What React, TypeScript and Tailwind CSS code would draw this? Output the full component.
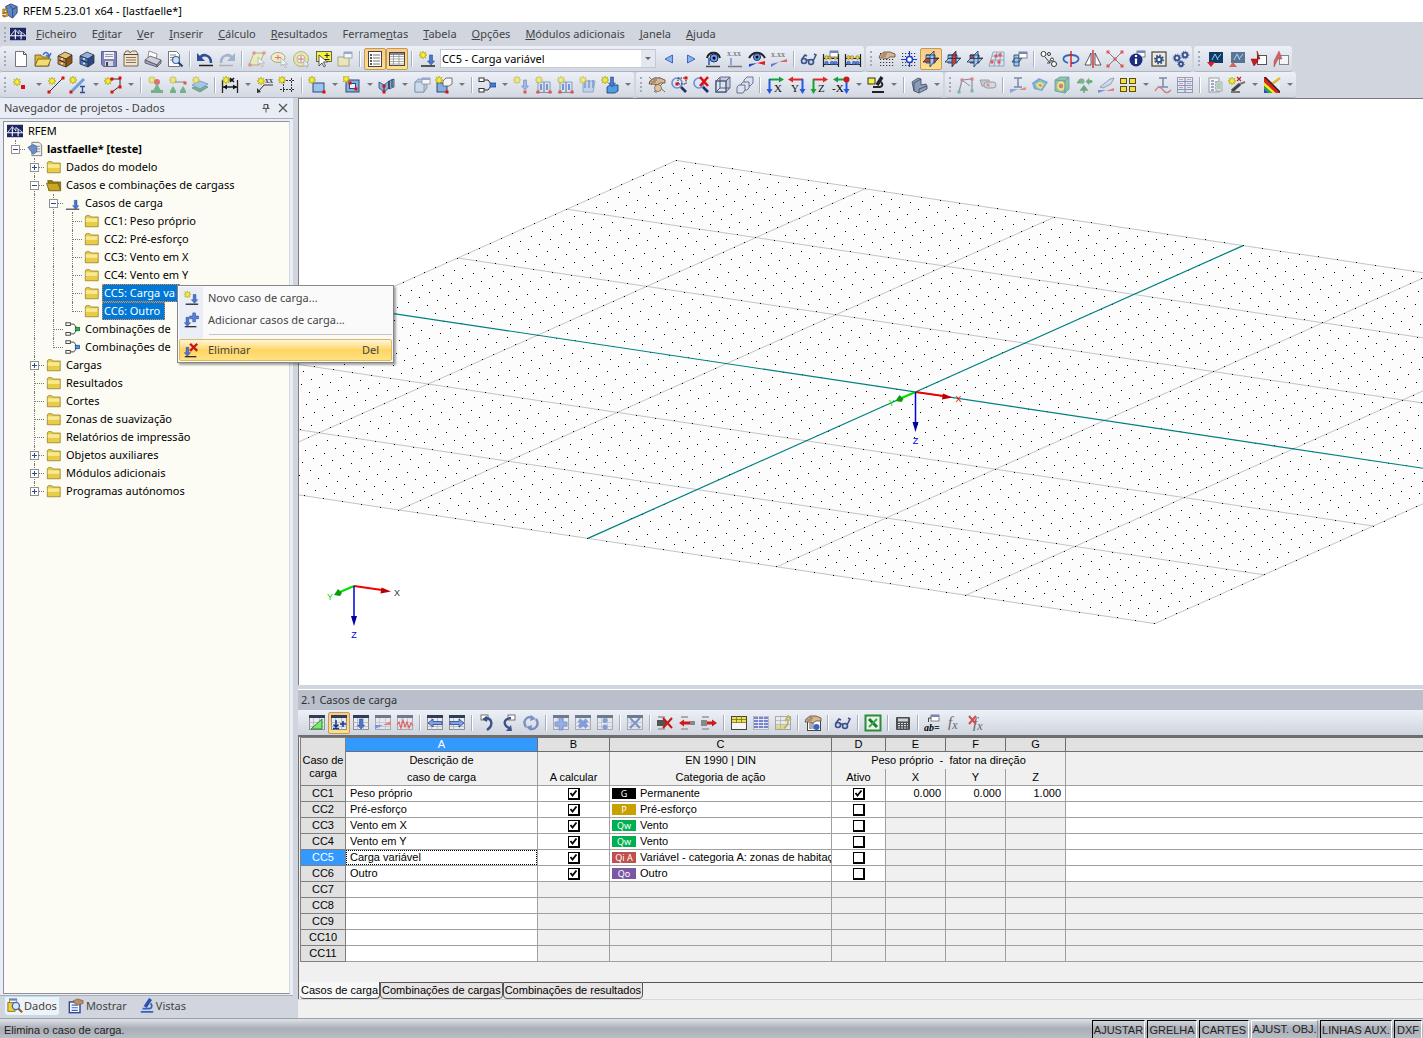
import React, { useState } from 'react'
import clsx from 'clsx'

const BURST = 'M0-4 1-1.7 3-3 1.8-.9 4 0 1.8.9 3 3 1 1.7 0 4-1 1.7-3 3-1.8.9-4 0-1.8-.9-3-3-1-1.7Z'

const star = (x: number, y: number) => (
  <path transform={`translate(${x} ${y})`} d={BURST} fill="#f7f02c" stroke="#a99d10" strokeWidth=".6" />
)
const node = (x: number, y: number, fill = '#e00d0d') => (
  <rect x={x - 1.5} y={y - 1.5} width="3" height="3" fill={fill} />
)
const line = (d: string, stroke = '#333', strokeWidth = 1) => (
  <path d={d} fill="none" stroke={stroke} strokeWidth={strokeWidth} />
)
const shape = (d: string, fill: string, stroke = '#333') => <path d={d} fill={fill} stroke={stroke} strokeWidth=".8" />
const downArrow = (x: number, y: number, fill = '#4a78d0') => (
  <path transform={`translate(${x} ${y})`} d="M-1.500 0h3v6H3.500L0 10-3.500 6h2Z" fill={fill} stroke="#1d3a80" strokeWidth=".5" />
)

const TABLE_BASE = (
  <>
    <rect x="1.500" y="1.500" width="15" height="14" fill="#e9ebee" stroke="#777" strokeWidth=".8" />
    <rect x="1" y="1" width="16" height="3" fill="#2e3e58" />
    {line('M1 8.500h16M1 12.500h16M5.500 4v12M11.500 4v12', '#aab', 0.7)}
  </>
)
const MAGNIFIER = (
  <>
    <circle cx="7" cy="7" r="5" fill="#d8e8fa" stroke="#6f8fd0" strokeWidth="1.600" />
    {line('M11 11l5 5', '#20306a', 2.600)}
  </>
)
const DOT_GRID = (
  <path d="M2 3.500h15M2 6.500h15M2 9.500h15M2 12.500h15M2 15.500h15" stroke="#333" strokeWidth="1.200" strokeDasharray="1.200 1.800" />
)
const GLASSES = (
  <>
    <circle cx="4" cy="11" r="2.500" fill="#c5d4f4" stroke="#3c4f86" strokeWidth="1.600" />
    <circle cx="11" cy="12" r="2.500" fill="#c5d4f4" stroke="#3c4f86" strokeWidth="1.600" />
    {line('M2 9l3-4 2 1M6 10l3 0M13 11l3-6-2-1', '#3c4f86', 1.500)}
  </>
)
const HAND = (
  <>
    {shape('M2 5l4-3h6l5 2v3l-5 0-3 2-4-1-4 0Z', '#d8b794', '#5e4632')}
    {line('M3 6h5M5 4h4', '#5e4632', 0.700)}
  </>
)
const FX = (
  <text x="2" y="13" fontFamily="Liberation Serif" fontStyle="italic" fontSize="15" fill="#666">
    f<tspan fontSize="12" dy="2">x</tspan>
  </text>
)

const abacus = (
  <>
    {line('M1.500 4v13M16.500 4v13M1 8.500h16M1 14.500h16', '#222', 1.200)}
    <g fill="#e9cf3a" stroke="#6e5f10" strokeWidth=".5">
      <circle cx="4.500" cy="7.500" r="1.800" /><circle cx="8" cy="7.500" r="1.800" /><circle cx="13.500" cy="7.500" r="1.800" />
    </g>
    <g fill="#5580dd" stroke="#24408a" strokeWidth=".5">
      <circle cx="4.500" cy="13" r="1.800" /><circle cx="10" cy="13" r="1.800" /><circle cx="13.500" cy="13" r="1.800" />
    </g>
  </>
)

const miniWindow = (x: number, y: number) => (
  <g>
    <rect x={x} y={y} width="8" height="6" fill="#fff" stroke="#555" strokeWidth=".7" />
    <rect x={x} y={y} width="8" height="2" fill="#6f86c8" />
  </g>
)

const planes = (xy: string, yz: string, xz: string) => (
  <>
    {shape('M4 5h9v8H4Z', xz, '#173a63')}
    {shape('M1 12l4-4h12l-4 4H1Z', xy, '#173a63')}
    {shape('M8 5l4-4v11l-4 5Z', yz, '#173a63')}
    {line('M4 5h9M4 8.500h12', '#173a63', 0.800)}
  </>
)

const viewAxes = (h: string, v: string, label: string, flip: boolean) => (
  <>
    {line(flip ? 'M4 3.500h11' : 'M3 3.500h11', h, 2)}
    <path d={flip ? 'M0 3.500l5-3v6Z' : 'M18 3.500l-5-3v6Z'} fill={h} />
    {line(flip ? 'M14.500 3v10' : 'M3.500 3v10', v, 2)}
    <path d={flip ? 'M14.500 18l-3-5h6Z' : 'M3.500 18l-3-5h6Z'} fill={v} />
    <text x={flip ? 3 : 8} y="16" fontFamily="Liberation Serif" fontSize="11" fill="#111">{label}</text>
  </>
)

const drawer = (front: string, top: string, side: string) => (
  <>
    {shape('M2 6l7-4 7 3-6 4Z', top)}
    {shape('M2 6l8 3v8l-8-3Z', front)}
    {shape('M10 9l6-4v8l-6 4Z', side)}
    {line('M3 10l6 2.500', '#222')}
    <circle cx="6" cy="9" r="1" fill="#eee" /><circle cx="6" cy="13.500" r="1" fill="#eee" />
  </>
)

const loadFrame = (
  <>
    {line('M3 16V6h6v10M9 16V6h6v10', '#5575b0', 1)}
    {line('M1 16.500h16', '#666', 1)}
    {line('M12 8v6M6 8v6', '#3f6bc9', 2)}
    {star(4, 4)}
    {node(3, 16)}{node(15, 16)}
  </>
)

const tableArrow = (left: boolean) => (
  <>
    {TABLE_BASE}
    <path d={left ? 'M2 9l5-4v2.500h9v3H7V13Z' : 'M16 9l-5-4v2.500H2v3h9V13Z'} fill="#7ba0ee" stroke="#1a3578" strokeWidth=".7" />
  </>
)

const icons: Record<string, React.ReactNode> = {
  newDoc: <>{shape('M3.500 1.500h8l3 3v12h-11Z', '#fff', '#555')}{line('M11.500 1.500v3h3', '#555')}</>,
  open: <>{shape('M1 5h6l1 2h7v9H1Z', '#d9b53c', '#6b5510')}{shape('M4 9h13l-3 7H1Z', '#f4dc72', '#6b5510')}{line('M9 5c2-4 5-3 6 1M17 3l-2 4-3-2', '#3a6ec2', 1.500)}</>,
  archive: drawer('#c88a34', '#eabf74', '#8a5416'),
  archiveBlue: drawer('#4a78c4', '#8fb2e6', '#27488c'),
  save: <>{shape('M1.500 1.500h15v15h-13l-2-2Z', '#8084bd', '#4a4d80')}<rect x="4" y="2" width="10" height="7" fill="#f2f2f8" />{line('M5 4.500h8M5 6.500h8', '#999')}<rect x="5" y="11" width="8" height="5" fill="#d6d6e0" /><rect x="6" y="12" width="2" height="4" fill="#444" /></>,
  project: <>{shape('M2 4l2-3h3l1 2 2-2h4l2 3v12H2Z', '#f1e4d0', '#5c4630')}{line('M2 4.500h14', '#5c4630', 1)}{line('M4 7.500h10M4 10h10M4 12.500h10', '#8a7355')}</>,
  print: <>{shape('M5 1l8 3-1 6-8-3Z', '#fff', '#777')}{shape('M1 10l5-4 11 4-4 5Z', '#cfcfe0', '#555')}{shape('M1 10l12 5v2L1 13ZM13 15l4-5v3l-4 4Z', '#9ea0c0', '#555')}</>,
  preview: <>{shape('M2.500 1.500h8l3 3v12h-11Z', '#fff', '#555')}{line('M4 5h6M4 7.500h5M4 10h3', '#888')}<circle cx="10" cy="10" r="3.500" fill="#cfe2f8" stroke="#44659c" strokeWidth="1.200" />{line('M12.500 12.500l4 4', '#24427e', 2.200)}</>,
  undo: <>{line('M4 8c3-5 11-3 11 5', '#2e4f92', 2.600)}<path d="M1 3v8h8Z" fill="#2e4f92" />{line('M3 15.500h14', '#222', 1.500)}</>,
  redo: <>{line('M14 8c-3-5-11-3-11 5', '#8397bd', 2.600)}<path d="M17 3v8H9Z" fill="#8397bd" />{line('M1 15.500h14', '#999', 1.500)}</>,
  polySel: <>{shape('M6 3h10l-5 12H1Z', '#f3efa8', '#87822f')}{node(6, 3, '#d66')}{node(16, 3, '#d66')}{node(2, 15, '#d66')}{shape('M10 7v8l2-2 2 4 1.500-1-2-3h3Z', '#fff', '#999')}</>,
  circSel: <><ellipse cx="8" cy="7.500" rx="7" ry="5" fill="#f6f1b6" stroke="#94894b" />{line('M5 7.500h6M8 5v5', '#d33')}{shape('M11 8v8l2-2 2 4 1.500-1-2-3h3Z', '#fff', '#999')}</>,
  ringSel: <><circle cx="9" cy="9" r="6" fill="none" stroke="#ece58a" strokeWidth="3" /><circle cx="9" cy="9" r="7.500" fill="none" stroke="#8d8434" strokeWidth=".8" /><circle cx="9" cy="9" r="4" fill="#fff" stroke="#8d8434" strokeWidth=".8" />{line('M9 6v6M6 9h6', '#d33')}{shape('M12 10v7l2-2 1 3 1-1-1-2h2Z', '#fff', '#999')}</>,
  plusSel: <><rect x="2.500" y="1.500" width="15" height="10" fill="#f9f23a" stroke="#444" strokeWidth=".8" />{line('M13 3v5M10.500 5.500h5M10.500 9.500h5', '#222')}{shape('M5 5v11l3-3 2 4 1.500-1-2-4h4Z', '#fff')}</>,
  winSel: <><rect x="2" y="7" width="11" height="9" fill="#f1eaa5" stroke="#7b7440" strokeWidth=".8" />{miniWindow(8, 2)}</>,
  list: <><rect x="2.500" y="1.500" width="13" height="15" fill="#fff" stroke="#444" />{line('M4 5h2M4 8h2M4 11h2M4 14h2', '#222', 1.300)}{line('M7 5h7M7 8h7M7 11h7M7 14h7', '#777')}</>,
  tableView: <><rect x="1.500" y="2.500" width="15" height="13" fill="#fff" stroke="#444" /><rect x="2" y="3" width="14" height="2" fill="#888" />{line('M2 6.500h14M2 9h14M2 11.500h14M2 14h14M5.500 3v13M11 3v13', '#888', 0.700)}</>,
  newCase: <>{star(5, 5)}{downArrow(13, 5)}{line('M3 16h14', '#333', 1.600)}</>,
  prev: shape('M12.500 5v8L5 9Z', '#8cb4f4', '#2250b0'),
  next: shape('M5.500 5v8L13 9Z', '#8cb4f4', '#2250b0'),
  eyeLoad: <>{line('M3 8c2-7 11-7 13 0', '#222', 2)}<circle cx="10" cy="8" r="4" fill="#6f9cf0" stroke="#173061" /><circle cx="10" cy="8" r="1.500" />{line('M5 8v7', '#4a79c8', 2)}{line('M2 16.500h14', '#444', 1.500)}</>,
  valLoad: <>{line('M5 8v7', '#5f86c8', 2)}{line('M2 16.500h14', '#444', 1.500)}<text x="1" y="6" fontSize="8" fontFamily="Liberation Serif">x.xx</text></>,
  eyeRes: <>{line('M1 8c4-7 12-7 16 0', '#222', 2)}<circle cx="9" cy="7" r="3.500" fill="#6f9cf0" stroke="#173061" /><circle cx="9" cy="7" r="1.500" /><path d="M1 17v-3l8-1Z" fill="#2444d0" /><path d="M9 13l8-2v4Z" fill="#e02020" /></>,
  valRes: <><text x="1" y="7" fontSize="8" fontFamily="Liberation Serif">x.xx</text><path d="M1 17v-3l8-2Z" fill="#2444d0" /><path d="M9 12l8-3v3Z" fill="#e02020" /></>,
  glasses: GLASSES,
  abacusWin: <>{abacus}{miniWindow(8, 1)}</>,
  abacus,
  handGrid: <>{DOT_GRID}{HAND}</>,
  snapGrid: <>{DOT_GRID}{line('M9.500 1v16M1 9.500h16', '#1c3ccc', 1.200)}<circle cx="9.500" cy="9.500" r="3" fill="#fff" stroke="#1c3ccc" strokeWidth="1.500" /></>,
  planeXY: planes('#e33b2a', '#9fc6ea', '#9fc6ea'),
  planeYZ: planes('#9fc6ea', '#e33b2a', '#9fc6ea'),
  planeXZ: planes('#9fc6ea', '#9fc6ea', '#e33b2a'),
  gridPlane: <>{shape('M5 2h11v14H1Z', '#d5e4f4', '#56718e')}{line('M4 6h12M3 10h13M9 2L6 16M13 2l-2 14', '#56718e', 0.800)}{node(8, 6)}{node(12, 5)}{node(11, 12)}{node(4, 12)}</>,
  planeWin: <>{shape('M2 12l3-4h7l-3 4ZM4 5h5v11H4Z', '#9fc6ea', '#173a63')}{miniWindow(9, 2)}</>,
  moveNodes: <><circle cx="3.500" cy="4" r="2.500" fill="#fff" stroke="#333" /><circle cx="9" cy="4" r="1.500" fill="#fff" stroke="#333" /><circle cx="14" cy="14" r="2.500" fill="#fff" stroke="#333" /><circle cx="12" cy="9.500" r="1.500" fill="#fff" stroke="#333" />{line('M5 7l5 6M10 13v-3M10 13H7', '#444')}</>,
  rotate: <>{line('M6 13c-7-2-6-8 3-8s10 6 3 8l-3 0', '#3566b8', 1.800)}{line('M9 1v16', '#e01818', 1.400)}</>,
  mirror: <>{shape('M7 3v12H1ZM11 3v12h6Z', '#fff', '#333')}{line('M9 0v18', '#e01818', 1.300)}</>,
  scale: <>{line('M3 3l12 12M15 3L3 15', '#444')}{node(9, 9)}{node(2, 2)}{node(16, 2)}{node(2, 16)}{node(16, 16)}</>,
  info: <>{miniWindow(9, 1)}<circle cx="8" cy="10" r="6.500" fill="#1c2c7e" />{line('M8 5v2M8 8.500V14', '#fff', 2.200)}</>,
  gearWin: <><rect x="2" y="2" width="14" height="14" fill="#f0ead8" stroke="#444" strokeWidth="1.200" /><circle cx="9" cy="9.500" r="4" fill="none" stroke="#34508c" strokeWidth="2" strokeDasharray="1.600 1.500" /><circle cx="9" cy="9.500" r="2.500" fill="#fff" stroke="#34508c" strokeWidth="2" /></>,
  gears: <><g fill="#dfe8fa" stroke="#34508c" strokeWidth="1.800"><circle cx="5" cy="8" r="2.300" /><circle cx="13" cy="5" r="2.300" /><circle cx="9" cy="14" r="2" /></g><g fill="none" stroke="#34508c" strokeDasharray="1 1.200"><circle cx="5" cy="8" r="3.800" /><circle cx="13" cy="5" r="3.800" /><circle cx="9" cy="14" r="3.200" /></g></>,
  dxfIn: <><rect x="3" y="2" width="14" height="11" fill="#123a66" /><path d="M6 10l3-6 3 6M11 9l4-5" stroke="#8fd0f2" fill="none" /><path d="M1 12h8l-4 5Z" fill="#d02020" /></>,
  dxfOut: <><rect x="3" y="2" width="14" height="11" fill="#123a66" /><path d="M6 10l3-6 3 6M11 9l4-5" stroke="#8fd0f2" fill="none" /><path d="M1 17h8l-4-5Z" fill="#d02020" /></>,
  pdfIn: <><rect x="7.500" y="5.500" width="9" height="9" fill="#fff" stroke="#555" /><path d="M7 1l3 8H1l3 7 4-5Z" fill="#d01818" stroke="#7a0c0c" strokeWidth=".5" /></>,
  pdfOut: <><rect x="7.500" y="5.500" width="9" height="9" fill="#fff" stroke="#555" /><path d="M7 1l3 8H6l-4 8 0-6Z" fill="#d01818" stroke="#7a0c0c" strokeWidth=".5" /></>,

  newNode: <>{star(5, 6)}<rect x="9" y="9" width="4" height="4" fill="#e00d0d" /></>,
  newLine: <>{line('M3 15L15 3')}{star(5, 5)}{node(16, 2)}{node(2, 16)}</>,
  newMember: <>{line('M3 15L15 3', '#6fa0dc', 3)}{star(4, 4)}{line('M11 10.500h5M11 16.500h5M13.500 10.500v6', '#2b4b9b', 1.300)}{node(2, 16)}</>,
  newPoly: <>{line('M6 3h10v7l-8 6')}{star(4, 5)}{node(8, 3)}{node(16, 2)}{node(16, 11)}{node(8, 16)}</>,
  nodeSupport: <>{star(5, 4)}<circle cx="10" cy="6" r="3" fill="#d33" /><path d="M10 7l4 8H6Z" fill="#3b9c5c" /><rect x="4" y="14" width="12" height="3" fill="#3b9c5c" /></>,
  lineSupport: <>{star(4, 4)}{line('M6 6h10', '#555')}{node(16, 7)}<path d="M4 10l3 5H1ZM14 10l3 5h-6Z" fill="#3b9c5c" /><path d="M1 15h6v2H1ZM11 15h6v2h-6Z" fill="#3b9c5c" /></>,
  surfSupport: <>{shape('M1 12l8-4 8 3-8 5Z', '#3b9c5c', '#286b40')}{shape('M1 9l8-4 8 3-8 5Z', '#8ab6e8', '#41649a')}{star(5, 4)}</>,
  dimension: <>{line('M1.500 4v13M16.500 4v13M2 11h14M3 4h8', '#222', 1.300)}<path d="M2 11l4-2.500v5ZM16 11l-4-2.500v5Z" fill="#111" />{star(5, 4)}{line('M9 2l4 4M13 2L9 6', '#111', 1.500)}</>,
  comment: <>{star(5, 5)}{line('M2 16L8 9h9', '#333')}<path d="M1 17v-5l4 4Z" fill="#333" /><text x="9" y="7" fontSize="8" fontFamily="Liberation Serif">xx</text></>,
  newGuide: <><path d="M5.500 2v15M13.500 2v15M2 4.500h15M2 13.500h15" fill="none" stroke="#333" strokeDasharray="2 1" />{star(4, 4)}</>,
  newSurface: <><rect x="5" y="7" width="11" height="9" fill="#9cc3ee" stroke="#2c4a76" />{star(4, 4)}{node(16, 16)}</>,
  opening: <><rect x="3" y="4" width="13" height="12" fill="#86aee0" stroke="#2c4a76" /><rect x="6.500" y="7.500" width="6" height="5" fill="#eef" stroke="#2c4a76" />{star(3, 3)}{node(7, 7)}{node(13, 13)}</>,
  fold: <>{shape('M1 6l5 3v7l-5-4ZM6 9l5-4v7l-5 4ZM11 5l5-2v8l-5 2Z', '#86aee0', '#2c4a76')}{node(6, 10)}{line('M11 5v8M14 3v8', '#333')}{node(6, 16)}</>,
  solidWin: <>{shape('M2 6l3-3h9v9l-3 4H2Z', '#9ebbe0', '#4a6488')}{shape('M2 6h9v10H2Z', '#c4d7ee', '#4a6488')}{miniWindow(9, 2)}</>,
  newSolid: <><rect x="2" y="7" width="10" height="9" fill="#86aee0" stroke="#2c4a76" />{shape('M8 5l3-3h6v6l-3 2H8Z', '#f5f5f5', '#555')}{star(4, 4)}{node(12, 16)}</>,
  flow: <>{line('M6 4h4l3 4M6 14h4l3-4', '#333')}<rect x="1" y="2" width="5" height="3.500" fill="#fff" stroke="#333" /><rect x="1" y="12.500" width="5" height="3.500" fill="#fff" stroke="#333" /><rect x="12" y="7" width="6" height="4" fill="#3f7de0" stroke="#1b3f8a" strokeWidth=".7" /></>,
  nodalLoad: <>{star(4, 4)}{downArrow(12, 4, '#7ca2e6')}{node(12, 16)}</>,
  lineLoad: loadFrame,
  memberLoad: loadFrame,
  surfLoad: <>{shape('M4 5h12l-2 11H4Z', '#b7cdea', '#5575b0')}{line('M6 4v8M10 4v8M14 4v8', '#4673c4', 1.500)}{star(4, 4)}</>,
  solidLoad: <>{shape('M6 11l3-2h8v6l-3 2H6Z', '#4f9de0', '#193a66')}{downArrow(11, 1)}{star(4, 4)}</>,
  pick: <>{line('M1 1l16 15M3 9l9-8M6 16L16 6M8 1v16M1 6h16', '#555', 0.800)}{HAND}<circle cx="10" cy="12" r="3.500" fill="#e2c39e" stroke="#5e4632" strokeWidth=".6" /></>,
  zoomWin: <>{MAGNIFIER}<rect x="8" y="2" width="8" height="6" fill="none" stroke="#222" strokeDasharray="1.500 1" />{node(7, 8)}{node(16, 2)}</>,
  zoomCancel: <>{MAGNIFIER}{line('M8 1l8 9M16 1L8 10', '#e01010', 2.600)}</>,
  cube: <>{shape('M2 5l4-4h10v11l-4 4H2Z', '#c3ccde', '#4b5878')}<rect x="2" y="5" width="10" height="11" fill="#dde3ee" stroke="#4b5878" strokeWidth="1.400" />{line('M12 5l4-4M6 2v10h10M6 12l-4 4', '#4b5878', 1)}</>,
  cubes: <>{shape('M8 4l3-3h6v6l-3 3H8Z', '#dde3ee', '#4b5878')}{shape('M5 8l2-2h6v6l-2 2H5Z', '#dde3ee', '#4b5878')}{shape('M1 11l2-2h6v5l-2 3H1Z', '#dde3ee', '#4b5878')}</>,
  viewX: viewAxes('#18a038', '#2458e0', 'X', false),
  viewY: viewAxes('#e02828', '#2458e0', 'Y', true),
  viewZ: viewAxes('#e02828', '#18a038', 'Z', false),
  viewNegX: <>{line('M5 3.500h9', '#18a038', 2)}<path d="M1 3.500l5-3v6Z" fill="#18a038" />{line('M14.500 3v10', '#2458e0', 2)}<path d="M14.500 18l-3-5h6Z" fill="#2458e0" /><circle cx="14.500" cy="3.500" r="3" fill="#d01818" /><text x="0" y="16" fontFamily="Liberation Serif" fontSize="11">-X</text></>,
  microscope: <><rect x="1" y="2" width="7" height="6" fill="#f9f23a" stroke="#333" />{line('M15 1l-5 8', '#222', 3.400)}{line('M5 16h12M6 11h7c3-1 3-3 1-5', '#222', 2)}</>,
  angle: <>{shape('M2 6l6-4 3 1v6l5-1 1 2v3l-8 4-5-2Z', '#8d9cb8', '#3c4860')}{line('M4 15V7l7-4M9 17v-4l8-3', '#3c4860', 0.800)}</>,
  frame: <>{line('M2 16L5 4l10-1 0 12', '#5a6575', 1.200)}{line('M5 4l8 6', '#5a6575')}{node(5, 4, '#d44')}{node(15, 3, '#d44')}{node(2, 16, '#4a6')}{node(15, 15, '#4a6')}</>,
  roller: <><path d="M1 4h9v6H3Z" fill="#b5b9c0" stroke="#777" /><rect x="5" y="6" width="12" height="6" rx="3" fill="#d0d3d8" stroke="#777" />{node(9, 9, '#d66')}</>,
  memberForces: <>{line('M5 2h8M9 2v9M5 11h8', '#3e5c8c', 1.500)}<path d="M1 17v-4l8 0Z" fill="#6a80d8" /><path d="M9 14l8-3v3Z" fill="#e06060" /></>,
  surfColors: <><path d="M1 7l7-5 9 4-6 9-8-2Z" fill="#4a78e0" /><path d="M3 8l6-4 6 3-5 7-5-2Z" fill="#54c878" /><path d="M5 8l4-2 4 2-3 5-4-2Z" fill="#f0e050" /><path d="M7 9l2-1 2 1-1 2Z" fill="#e04040" /></>,
  solidColors: <>{shape('M2 4l5-3h9v12l-4 4-10-2Z', '#54b878', '#3c6a90')}<ellipse cx="8" cy="10" rx="4" ry="5" fill="#f0e050" /><circle cx="8" cy="10" r="2.200" fill="#e04040" />{line('M12 5v12M2 4l10 1 4-4', '#3c6a90', 1)}</>,
  reactions: <><path d="M9 17v-5M9 10l3 4H6Z" stroke="#2f8a48" fill="#2f8a48" strokeWidth="1.500" /><path d="M2 7h7l-3-4-1 0ZM11 5.500l3-3v2h3v2h-3v2Z" stroke="#2f8a48" fill="#2f8a48" strokeWidth=".8" /><circle cx="7" cy="5" r="2.500" fill="#4b9660" /></>,
  blade: <>{shape('M3 11L13 3l4-1-3 6-8 4Z', '#c3d4ea', '#56657c')}<path d="M1 17v-3l8 0Z" fill="#5068d8" /><path d="M9 15l8-3v3Z" fill="#e05050" /></>,
  tiles: <g fill="#f3dc4e" stroke="#5c4d10" strokeWidth="1"><rect x="1.500" y="2.500" width="6" height="5" /><rect x="10.500" y="2.500" width="6" height="5" /><rect x="1.500" y="10.500" width="6" height="5" /><rect x="10.500" y="10.500" width="6" height="5" /></g>,
  section: <>{line('M5 2h8M9 2v9M4 11h10', '#3e5c8c', 1.500)}{line('M1 15c3-5 5-5 8-1s5 3 8 0', '#d04848', 1.300)}</>,
  resTable: <><rect x="1.500" y="1.500" width="15" height="15" fill="#e4e9f4" stroke="#6c7796" />{line('M1 5.500h16M1 9.500h16M1 13.500h16M9 1v16', '#5c6ca0', 1.200)}{line('M3 3.500h4M11 3.500h4M3 7.500h4M11 7.500h4M3 11.500h4M11 11.500h4', '#c77')}</>,
  report: <><rect x="3" y="2" width="10" height="14" fill="#fff" stroke="#777" />{line('M5 5h3M5 8h3M5 11h3M5 14h3', '#46a', 1.300)}{line('M9 6h3M9 9h3M9 12h3', '#b66', 1.300)}<rect x="10" y="6" width="6" height="9" fill="#dfe5ee" stroke="#777" strokeWidth=".7" />{line('M11 8h4M11 10h4M11 12h4', '#4a4')}</>,
  newPen: <>{line('M4 15l8-7', '#444', 3)}{line('M12 8l5-2M3 16h9', '#777', 2)}{star(4, 5)}{line('M9 1l4 4M13 1L9 5', '#c22', 1.200)}</>,
  colors: <><path d="M1 1h16v16H1Z" fill="#222" /><path d="M1 1l16 16h-4L1 6Z" fill="#e02020" /><path d="M1 6l12 11H9L1 10Z" fill="#f3e32c" /><path d="M1 10l8 7H5l-4-3Z" fill="#2ca844" /><path d="M1 13l4 4H1Z" fill="#2848d8" /><path d="M3 1h14v14Z" fill="#e9edf4" />{line('M9 8l8-6', '#e0bb2e', 2.400)}{line('M7 6l3 3', '#333', 1.500)}</>,

  tEdit: <>{TABLE_BASE}<path d="M3 15L14 5v10Z" fill="#7be672" stroke="#288a2c" /></>,
  tFilter: <>{TABLE_BASE}{line('M6 6v7M3.500 10.500L6 13l2.500-2.500M3 14.500h6M13 7v6M10 10h6', '#123a8a', 1.500)}</>,
  tDown: <>{TABLE_BASE}{downArrow(9, 5)}</>,
  tRes: <>{TABLE_BASE}<path d="M1 15v-4l8 0Z" fill="#5068d8" /><path d="M9 11l8-4v4Z" fill="#e05050" /></>,
  tWave: <>{TABLE_BASE}{line('M1 11l2-3 2 6 2-8 2 7 2-5 2 6 2-5 2 3', '#e02020', 1.200)}</>,
  tLeft: tableArrow(true),
  tRight: tableArrow(false),
  tUndo: <><rect x="3" y="1" width="7" height="5" fill="#fff" stroke="#555" strokeWidth=".8" />{line('M7 4c7 0 9 7 2 12', '#3a5286', 2.400)}<path d="M4 5l5-3v6Z" fill="#3a5286" /></>,
  tRedo: <><rect x="8" y="1" width="7" height="5" fill="#fff" stroke="#555" strokeWidth=".8" />{line('M11 4C3 5 3 11 9 14', '#3a5286', 2.400)}<path d="M12 17l-6 0 5-6Z" fill="#3a5286" /></>,
  tSync: <>{line('M4 13C0 7 5 1 11 4M14 5c4 6-1 12-7 9', '#4a66a8', 2.400)}<path d="M9 1l5 4-6 2ZM9 17l-5-4 6-2Z" fill="#4a66a8" /></>,
  tPlus: <>{TABLE_BASE}<path d="M7 4h4v4h4v4h-4v4H7v-4H3V8h4Z" fill="#6f94ea" stroke="#2f4f9e" strokeWidth=".6" /></>,
  tMul: <>{TABLE_BASE}{line('M5 6l8 7M13 6l-8 7', '#5578d2', 4)}</>,
  tDiv: <>{TABLE_BASE}<circle cx="9" cy="6.500" r="2.500" fill="#5578d2" /><circle cx="9" cy="13" r="2.500" fill="#5578d2" /></>,
  tClear: <>{TABLE_BASE}{line('M4 4l10 10M14 4L4 14', '#4766b4', 1.800)}</>,
  rowDel: <>{line('M2 3h7M2 15h7', '#aaa', 2)}<rect x="1" y="6" width="9" height="6" fill="#555" />{line('M7 4l9 10M16 4L7 14', '#c81818', 2)}</>,
  rowIn: <>{line('M3 3h7M3 15h7', '#aaa', 2)}<path d="M1 9l5-3.500v2h6v3H6v2Z" fill="#d01818" /><rect x="12" y="7" width="5" height="4" fill="#888" /></>,
  rowOut: <>{line('M2 3h7M2 15h7', '#aaa', 2)}<rect x="1" y="6" width="6" height="6" fill="#888" /><path d="M17 9l-5-3.500v2H7v3h5v2Z" fill="#d01818" /></>,
  tYellow: <><rect x="1.500" y="2.500" width="15" height="13" fill="#f5f5f5" stroke="#444" /><rect x="2" y="3" width="14" height="5" fill="#ece04e" />{line('M2 5.500h14M2 8.500h14M6.500 2v7M11.500 2v7', '#7a7220', 0.800)}</>,
  tBlue: <><rect x="1.500" y="2.500" width="15" height="13" fill="#e9ecf7" stroke="#888" strokeWidth=".7" />{line('M2 4h14M2 7h14M2 10h14M2 13h14', '#4054c0', 1.800)}{line('M6.500 2v13M11.500 2v13', '#fff', 0.700)}</>,
  tArrow: <><rect x="1.500" y="2.500" width="15" height="13" fill="#eee" stroke="#888" /><rect x="2" y="11" width="10" height="4" fill="#e5da4e" />{line('M2 6.500h14M2 10.500h14M6.500 3v12', '#999', 0.800)}{line('M10 14c4-2 4-5 4-9M11 7l3-5 3 4', '#a39a28', 1.800)}</>,
  handSheet: <><rect x="3.500" y="6.500" width="13" height="10" fill="#fff" stroke="#444" />{line('M5 10h5M5 12h5M5 14h5', '#555')}<circle cx="12.500" cy="13" r="3" fill="#3766c2" />{HAND}</>,
  excel: <><rect x="1.500" y="1.500" width="15" height="15" fill="#e8f5e8" stroke="#2c8a3a" strokeWidth="2" />{line('M5 5l8 8', '#1f7a2e', 3)}{line('M13 5l-8 8', '#3aa84a', 2)}</>,
  calc: <><rect x="2" y="3" width="14" height="13" rx="1" fill="#4c4c54" /><rect x="4" y="4.500" width="10" height="3" fill="#cdd6d0" />{line('M4 9.500h10M4 11.700h10M4 14h10', '#ddd', 1.200)}{line('M6.500 8v8M9.500 8v8M12.500 8v8', '#4c4c54', 1)}</>,
  abWin: <>{miniWindow(7, 1)}{line('M4.500 8V4h3', '#444')}<text x="0" y="17" fontFamily="Liberation Serif" fontStyle="italic" fontWeight="bold" fontSize="10">ab=</text></>,
  fx: FX,
  fxDel: <><g transform="translate(3 1)">{FX}</g>{line('M1 2l7 8M8 2l-7 8', '#d05050', 2)}</>,

  folder: <>{shape('M1.500 4.500l1-1.500h4l1 1.500h8.500v11h-14.500Z', '#e9cc45', '#8a7420')}<path d="M2 6h13v4H2Z" fill="#f8ea92" /></>,
  folderOpen: <>{shape('M2 4h5l1 1.500h8.500V15H3Z', '#9c7d14', '#6b560e')}{shape('M0.500 7h13l3 8.500H3.500Z', '#c9a724', '#6b560e')}</>,
  rfem: <><rect width="18" height="14" y="2" fill="#1d2766" />{line('M0 11h18M6 5v10M12.500 7v8', '#fff', 1.200)}{line('M1 10.500L6 4l4 5 0-4 7 5', '#fff', 0.900)}</>,
  model: <>{shape('M5.500 1.500h8l3 3v12h-11Z', '#f0f0f0', '#555')}{line('M11 6h4M11 9h4M9 12h6', '#888')}<path d="M1 7l6-3 4 2v6l-4 3Z" fill="#6a8fc8" stroke="#35517c" strokeWidth=".7" /></>,
  caseLoad: <>{line('M1 16h15', '#555', 1.500)}{downArrow(12, 6)}</>,
  comboGreen: <>{line('M6 3.500h4l3 4M6 14.500h4l3-4', '#333')}<rect x="1" y="2" width="5" height="3" fill="#fff" stroke="#333" /><rect x="1" y="13" width="5" height="3" fill="#fff" stroke="#333" /><rect x="11.500" y="7" width="5" height="4" fill="#28b848" stroke="#104e20" strokeWidth=".7" /></>,
  comboBlue: <>{line('M6 3.500h4l3 4M6 14.500h4l3-4', '#333')}<rect x="1" y="2" width="5" height="3" fill="#fff" stroke="#333" /><rect x="1" y="13" width="5" height="3" fill="#fff" stroke="#333" /><rect x="11.500" y="7" width="5" height="4" fill="#4a90f0" stroke="#1c3f80" strokeWidth=".7" /></>,
  addCase: <>{downArrow(5, 6)}{line('M2 16.500h13', '#333', 1.500)}<path d="M11 1h3v3.500h3.500v3H14V11h-3V7.500H7.500v-3H11Z" fill="#5c82e0" stroke="#1e3c88" strokeWidth=".6" /></>,
  delCase: <>{downArrow(5, 6)}{line('M2 16.500h13', '#333', 1.500)}{line('M8 2l8 8M16 2l-8 8', '#c81414', 2.600)}</>,
  tabData: <>{miniWindow(3, 1)}<rect x="1" y="5" width="8" height="10" fill="#f0cf3c" stroke="#8a7014" /><circle cx="10" cy="9" r="4" fill="#d8e8fa" stroke="#3f68b0" strokeWidth="1.500" />{line('M13 12l4 4', '#8a6420', 2.400)}</>,
  tabShow: <><rect x="1.500" y="4.500" width="12" height="12" fill="#fff" stroke="#2a4a98" strokeWidth="1.600" />{line('M4 8h7M4 11h7M4 14h7', '#3d64b8', 1.300)}<path d="M6 3l5-2 6 2v3l-6 2-4-2Z" fill="#b88f66" stroke="#5e4632" strokeWidth=".6" /></>,
  tabViews: <>{line('M13 1L7 10', '#2d52b0', 4)}{line('M2 15.500h14M4 12h8c3-1 3-4 1-6', '#3a60c0', 2)}</>,
}

const FADED = new Set([
  'redo', 'polySel', 'circSel', 'ringSel', 'winSel', 'valLoad', 'valRes', 'gridPlane', 'scale', 'dxfOut', 'pdfOut',
  'nodeSupport', 'lineSupport', 'surfSupport', 'solidWin', 'nodalLoad', 'lineLoad', 'memberLoad', 'surfLoad', 'frame',
  'roller', 'memberForces', 'surfColors', 'solidColors', 'reactions', 'blade', 'section', 'resTable', 'report',
  'tRes', 'tWave', 'tSync', 'tPlus', 'tMul', 'tDiv', 'tClear', 'tBlue', 'tArrow',
])

// [before the access key, access key, rest]
const MENUS = [
  ['', 'F', 'icheiro'], ['E', 'd', 'itar'], ['', 'V', 'er'], ['', 'I', 'nserir'], ['', 'C', 'álculo'], ['', 'R', 'esultados'],
  ['Ferrame', 'n', 'tas'], ['', 'T', 'abela'], ['', 'O', 'pções'], ['', 'M', 'ódulos adicionais'], ['', 'J', 'anela'], ['', 'A', 'juda'],
]

const BAR_ONE = [
  'newDoc open archive archiveBlue save project print preview | undo redo | polySel circSel ringSel plusSel winSel | *list *tableView | newCase combo prev next eyeLoad valLoad eyeRes valRes | glasses abacusWin abacus',
  'handGrid snapGrid *planeXY planeYZ planeXZ gridPlane planeWin | moveNodes rotate mirror scale info gearWin gears',
  'dxfIn dxfOut pdfIn pdfOut',
]
const BAR_TWO = [
  'newNode v newLine newMember v newPoly v | nodeSupport lineSupport surfSupport | dimension v comment newGuide | newSurface v opening v fold v solidWin newSolid v | flow v nodalLoad lineLoad memberLoad surfLoad solidLoad v',
  'pick zoomWin zoomCancel cube cubes | viewX viewY viewZ viewNegX v microscope v | angle v',
  'frame roller | memberForces surfColors solidColors reactions blade tiles v section resTable | report newPen v colors v',
]
const BAR_TABLE =
  'tEdit *tFilter tDown tRes tWave | tLeft tRight | tUndo tRedo tSync | tPlus tMul tDiv | tClear | rowDel rowIn rowOut | tYellow tBlue tArrow | handSheet | glasses | excel | calc | abWin fx fxDel'

interface TreeRow {
  label: string
  icon: string
  guides: string
  toggle?: '+' | '-'
  selected?: boolean
}

// guides: one character per level. T = branch, L = last branch, | = line passing through
const TREE: TreeRow[] = [
  { label: 'lastfaelle* [teste]', icon: 'model', guides: 'L', toggle: '-' },
  { label: 'Dados do modelo', icon: 'folder', guides: ' T', toggle: '+' },
  { label: 'Casos e combinações de cargass', icon: 'folderOpen', guides: ' T', toggle: '-' },
  { label: 'Casos de carga', icon: 'caseLoad', guides: ' |T', toggle: '-' },
  { label: 'CC1: Peso próprio', icon: 'folder', guides: ' ||T' },
  { label: 'CC2: Pré-esforço', icon: 'folder', guides: ' ||T' },
  { label: 'CC3: Vento em X', icon: 'folder', guides: ' ||T' },
  { label: 'CC4: Vento em Y', icon: 'folder', guides: ' ||T' },
  { label: 'CC5: Carga va', icon: 'folder', guides: ' ||T', selected: true },
  { label: 'CC6: Outro', icon: 'folder', guides: ' ||L', selected: true },
  { label: 'Combinações de', icon: 'comboGreen', guides: ' |T' },
  { label: 'Combinações de', icon: 'comboBlue', guides: ' |L' },
  { label: 'Cargas', icon: 'folder', guides: ' T', toggle: '+' },
  { label: 'Resultados', icon: 'folder', guides: ' T' },
  { label: 'Cortes', icon: 'folder', guides: ' T' },
  { label: 'Zonas de suavização', icon: 'folder', guides: ' T' },
  { label: 'Relatórios de impressão', icon: 'folder', guides: ' T' },
  { label: 'Objetos auxiliares', icon: 'folder', guides: ' T', toggle: '+' },
  { label: 'Módulos adicionais', icon: 'folder', guides: ' T', toggle: '+' },
  { label: 'Programas autónomos', icon: 'folder', guides: ' L', toggle: '+' },
]

const CASES = [
  { id: 'CC1', name: 'Peso próprio', tag: 'G', color: 'bg-black', category: 'Permanente', active: true, factors: ['0.000', '0.000', '1.000'] },
  { id: 'CC2', name: 'Pré-esforço', tag: 'P', color: 'bg-[#c8a000]', category: 'Pré-esforço' },
  { id: 'CC3', name: 'Vento em X', tag: 'Qw', color: 'bg-[#00b050]', category: 'Vento' },
  { id: 'CC4', name: 'Vento em Y', tag: 'Qw', color: 'bg-[#00b050]', category: 'Vento' },
  { id: 'CC5', name: 'Carga variável', tag: 'Qi A', color: 'bg-[#c0504d]', category: 'Variável - categoria A: zonas de habitaç' },
  { id: 'CC6', name: 'Outro', tag: 'Qo', color: 'bg-[#7c58a4]', category: 'Outro' },
]
const EMPTY_CASES = ['CC7', 'CC8', 'CC9', 'CC10', 'CC11']

function Icon({ name, size = 'size-[18px]' }: { name: string; size?: string }) {
  return (
    <svg viewBox="0 0 18 18" className={clsx('block shrink-0', size, FADED.has(name) && 'opacity-65')} aria-hidden="true">
      {icons[name]}
    </svg>
  )
}

function CaseSelect() {
  return (
    <div className="mx-[2px] flex h-[19px] w-[216px] items-stretch border border-[#c3c9d4] bg-white">
      <select aria-label="Caso de carga" className="w-full appearance-none bg-transparent pl-px text-[11px] leading-4 text-black outline-none">
        <option>CC5 - Carga variável</option>
        <option>CC6 - Outro</option>
      </select>
      <span className="pointer-events-none flex w-[14px] shrink-0 items-center justify-center bg-[#e3e7ef]">
        <span className="border-x-[3px] border-t-[3px] border-x-transparent border-t-[#666]" />
      </span>
    </div>
  )
}

function ToolItems({ items }: { items: string }) {
  return (
    <>
      {items.split(' ').map((item, i) => {
        if (item === '|') return <span key={i} className="mx-[3px] h-4 w-[2px] border-r border-l border-[#a9b0bd] border-r-white" />
        if (item === 'v') {
          return (
            <button key={i} aria-label="Mais opções" className="flex h-[22px] w-[13px] items-center justify-center">
              <span className="border-x-[3px] border-t-[3px] border-x-transparent border-t-[#777]" />
            </button>
          )
        }
        if (item === 'combo') return <CaseSelect key={i} />
        const on = item.startsWith('*')
        const name = on ? item.slice(1) : item
        return (
          <button
            key={i}
            aria-label={name}
            aria-pressed={on}
            className={clsx(
              'flex h-[22px] w-[22px] items-center justify-center',
              on && 'rounded-[2px] border border-[#c39a56] bg-gradient-to-b from-[#fcc98a] to-[#fbe08e]',
            )}
          >
            <Icon name={name} />
          </button>
        )
      })}
    </>
  )
}

function Grip() {
  return <span className="mr-1 ml-1 h-[15px] w-[2px] shrink-0 border-l-2 border-dotted border-[#a4abb8]" />
}

function ToolRow({ groups }: { groups: string[] }) {
  return (
    <div className="flex h-[26px] gap-[2px] overflow-hidden">
      {groups.map((group, i) => (
        <div
          key={i}
          className="flex shrink-0 items-center rounded-[3px] border-b border-[#aeb4c0] bg-gradient-to-b from-[#edf0f7] to-[#d3d8e2]"
        >
          <Grip />
          <ToolItems items={group} />
        </div>
      ))}
    </div>
  )
}

function MenuBar() {
  return (
    <nav className="flex h-6 items-center text-[#444]">
      <Grip />
      <Icon name="rfem" size="size-4" />
      <div className="flex gap-px pl-[3px]">
        {MENUS.map(([before, key, rest]) => (
          <button key={rest} className="px-[7px] whitespace-nowrap">
            {before}<u>{key}</u>{rest}
          </button>
        ))}
      </div>
    </nav>
  )
}

function TreeItem({ row }: { row: TreeRow }) {
  const cells = row.guides.split('')
  return (
    <li className="flex h-[18px] items-center">
      {cells.map((cell, i) => {
        const last = i === cells.length - 1
        return (
          <span key={i} className="relative h-full w-[19px] shrink-0">
            {cell !== ' ' && (
              <span className={clsx('absolute top-0 left-[9px] border-l border-dotted border-[#777]', cell === 'L' ? 'h-[10px]' : 'h-full')} />
            )}
            {(cell === 'T' || cell === 'L') && <span className="absolute top-[9px] right-0 left-[10px] border-t border-dotted border-[#777]" />}
            {last && row.toggle && (
              <button
                aria-label={row.toggle === '+' ? 'Expandir' : 'Recolher'}
                className="absolute top-[5px] left-[5px] size-[9px] border border-[#919191] bg-white"
              >
                <span className="absolute top-[3px] left-[1px] h-px w-[5px] bg-[#2a4a9c]" />
                {row.toggle === '+' && <span className="absolute top-[1px] left-[3px] h-[5px] w-px bg-[#2a4a9c]" />}
              </button>
            )}
          </span>
        )
      })}
      <span className="ml-[2px] shrink-0"><Icon name={row.icon} size="size-4" /></span>
      <span
        className={clsx(
          'whitespace-nowrap',
          row.selected ? 'ml-[2px] border border-dotted border-[#ff8728] bg-[#0078d7] pr-1 pl-px text-white' : 'ml-1',
          row.icon === 'model' && 'font-bold',
        )}
      >
        {row.label}
      </span>
    </li>
  )
}

function Navigator() {
  return (
    <aside className="flex w-[293px] shrink-0 flex-col overflow-hidden">
      <header className="flex h-5 items-center bg-[#e8edf6] pr-[5px] pl-1 text-[#444]">
        <h2 className="flex-1">Navegador de projetos - Dados</h2>
        <button aria-label="Fixar" className="mr-[7px]">
          <svg viewBox="0 0 10 10" className="size-[10px]" fill="none" stroke="#555"><path d="M3 1.500h4v4H3ZM6.500 1v5M1.500 5.500h7M5 6v3.500" /></svg>
        </button>
        <button aria-label="Fechar">
          <svg viewBox="0 0 10 10" className="size-[10px]" fill="none" stroke="#555" strokeWidth="1.300"><path d="M1 1l8 8M9 1L1 9" /></svg>
        </button>
      </header>
      <div className="flex flex-1 border-t border-[#a8adb8] bg-[#e8edf6] px-[3px] pt-[2px] pb-px">
        <ul className="flex-1 border border-[#8c919c] border-r-[#d5d8de] bg-[#fcfcf4] pl-[2px] text-black">
          <li className="flex h-[18px] items-center gap-[5px] pl-px">
            <Icon name="rfem" size="size-4" />
            RFEM
          </li>
          {TREE.map((row, i) => <TreeItem key={i} row={row} />)}
        </ul>
      </div>
      <div className="flex h-[23px] items-start border-t border-[#a8adb8] pl-1 text-[#444]">
        <button className="flex h-5 items-center gap-px rounded-b border border-[#b9e0e8] bg-[#eff2f8] px-[2px]">
          <Icon name="tabData" size="size-4" />Dados
        </button>
        <button className="ml-2 flex h-5 items-center gap-[2px]"><Icon name="tabShow" size="size-4" />Mostrar</button>
        <button className="ml-3 flex h-5 items-center gap-px"><Icon name="tabViews" size="size-4" />Vistas</button>
      </div>
    </aside>
  )
}

const ORIGIN = { x: 616.5, y: 293 }
const STEP_X = { x: 18.9, y: 2.84 }
const STEP_Y = { x: -10.92, y: 4.88 }

function gridPoint(i: number, j: number) {
  return { x: ORIGIN.x + i * STEP_X.x + j * STEP_Y.x, y: ORIGIN.y + i * STEP_X.y + j * STEP_Y.y }
}

function segment(i1: number, j1: number, i2: number, j2: number) {
  const a = gridPoint(i1, j1)
  const b = gridPoint(i2, j2)
  return `M${a.x} ${a.y}L${b.x} ${b.y}`
}

function gridDots() {
  let d = ''
  for (let i = -30; i <= 30; i++) {
    for (let j = -30; j <= 30; j++) {
      const p = gridPoint(i, j)
      d += `M${Math.floor(p.x)} ${Math.floor(p.y)}h1v1h-1z`
    }
  }
  return d
}

const MAJORS = [-30, -20, -10, 10, 20, 30]
const MAJOR_LINES = MAJORS.map((n) => segment(n, -30, n, 30) + segment(-30, n, 30, n)).join('')
const AXIS_LINES = segment(-30, 0, 30, 0) + segment(0, -30, 0, 30)
const PLANE = [gridPoint(-30, -30), gridPoint(30, -30), gridPoint(30, 30), gridPoint(-30, 30)].map((p) => `${p.x},${p.y}`).join(' ')

function Axes({ x, y, xColor }: { x: number; y: number; xColor: string }) {
  return (
    <g transform={`translate(${x} ${y})`} fontFamily="Liberation Sans" fontSize="9" textAnchor="middle">
      <path d="M0 0L28 4" stroke="#f00000" strokeWidth="2" />
      <path d="M37 5.500L26.500 7.500 27.500 1.500Z" fill="#b80000" />
      <path d="M0 0L-14 6" stroke="#00e000" strokeWidth="2" />
      <path d="M-20 9l4-6 4 4-2 3Z" fill="#0a9a0a" />
      <path d="M0 0V32" stroke="#0000e0" strokeWidth="1.500" />
      <path d="M0 40L-3 30H3Z" fill="#0000a0" />
      <text x="43" y="10" fill={xColor}>X</text>
      <text x="-24" y="14" fill="#00e000">Y</text>
      <text x="0" y="52" fill="#0000e0">Z</text>
    </g>
  )
}

function Viewport() {
  return (
    <div className="flex min-h-[300px] flex-1 border-t border-l border-[#7c7c7c] bg-white">
      <svg className="h-auto min-h-0 w-full" role="img" aria-label="Área de trabalho">
        <polygon points={PLANE} fill="#fcfcfc" />
        <path d={MAJOR_LINES} fill="none" stroke="#c4c4c4" />
        <path d={gridDots()} fill="#000" shapeRendering="crispEdges" />
        <path d={AXIS_LINES} fill="none" stroke="#008080" strokeWidth="1.200" />
        <Axes x={616.500} y={293} xColor="#f00000" />
        <Axes x={55} y={487} xColor="#333" />
      </svg>
    </div>
  )
}

function CheckBox({ label, defaultChecked = false }: { label: string; defaultChecked?: boolean }) {
  return (
    <span className="mx-auto grid size-3">
      <input
        type="checkbox"
        aria-label={label}
        defaultChecked={defaultChecked}
        className="peer col-start-1 row-start-1 size-3 appearance-none border border-r-2 border-b-2 border-black bg-white"
      />
      <svg viewBox="0 0 12 12" className="pointer-events-none col-start-1 row-start-1 hidden size-3 peer-checked:block" fill="none" stroke="#000" strokeWidth="1.800">
        <path d="M2.500 5l2 2.500 4-5" />
      </svg>
    </span>
  )
}

const CELL = 'h-4 border-r border-b border-[#a0a0a0] p-0 leading-[15px]'
const LETTER = 'h-[15px] border-t border-b border-[#6e6e6e] p-0 font-normal leading-[13px]'
const HEAD = 'border-r border-[#a0a0a0] bg-[#f0f0f0] p-0 font-normal align-top'

function RowHead({ id, current = false }: { id: string; current?: boolean }) {
  return (
    <th
      scope="row"
      className={clsx(
        'h-4 border-r border-b border-l border-[#808080] p-0 text-center leading-[15px] font-normal',
        current ? 'bg-[#3399ff] text-white' : 'bg-[#e1e1e1]',
      )}
    >
      {id}
    </th>
  )
}

function CaseTable() {
  return (
    <table className="w-full table-fixed border-separate border-spacing-0 text-[11px] text-black">
      <colgroup>
        <col className="w-[46px]" />
        <col className="w-[192px]" />
        <col className="w-[72px]" />
        <col className="w-[222px]" />
        <col className="w-[54px]" />
        <col className="w-[60px]" />
        <col className="w-[60px]" />
        <col className="w-[60px]" />
        <col />
      </colgroup>
      <thead>
        <tr>
          <th rowSpan={3} className="border border-[#808080] bg-[#e1e1e1] p-0 pb-[5px] align-bottom leading-[13px] font-normal">
            Caso de<br />carga
          </th>
          <th className={clsx(LETTER, 'border-r bg-[#3399ff] text-white')}>A</th>
          {['B', 'C', 'D', 'E', 'F', 'G'].map((letter) => (
            <th key={letter} className={clsx(LETTER, 'border-r bg-[#e1e1e1]')}>{letter}</th>
          ))}
          <th className={clsx(LETTER, 'bg-[#e1e1e1]')} />
        </tr>
        <tr className="h-[17px] leading-4">
          <th className={HEAD}>Descrição de</th>
          <th className={HEAD} />
          <th className={HEAD}>EN 1990 | DIN</th>
          <th className={HEAD} colSpan={4}>Peso próprio &nbsp;- &nbsp;fator na direção</th>
          <th className="bg-[#f0f0f0]" />
        </tr>
        <tr className="h-[17px] leading-4">
          {['caso de carga', 'A calcular', 'Categoria de ação', 'Ativo', 'X', 'Y', 'Z'].map((text) => (
            <th key={text} className={clsx(HEAD, 'border-b')}>{text}</th>
          ))}
          <th className="border-b border-[#a0a0a0] bg-[#f0f0f0]" />
        </tr>
      </thead>
      <tbody>
        {CASES.map((row) => (
          <tr key={row.id}>
            <RowHead id={row.id} current={row.id === 'CC5'} />
            <td className={clsx(CELL, 'bg-white')}>
              <span className={clsx('block h-[15px]', row.id === 'CC5' ? 'border border-dotted border-black pl-[3px] leading-[13px]' : 'pl-1')}>{row.name}</span>
            </td>
            <td className={clsx(CELL, 'bg-white')}><CheckBox label={`${row.id} a calcular`} defaultChecked /></td>
            <td className={clsx(CELL, 'bg-white')}>
              <div className="flex h-[15px] items-center overflow-hidden whitespace-nowrap">
                <span className={clsx('mr-1 ml-[2px] h-[11px] w-6 shrink-0 text-center font-["Noto_Sans"] text-[9px] leading-[11px] text-white', row.color)}>
                  {row.tag}
                </span>
                {row.category}
              </div>
            </td>
            <td className={clsx(CELL, 'bg-white')}><CheckBox label={`${row.id} ativo`} defaultChecked={row.active} /></td>
            {[0, 1, 2].map((i) => (
              <td key={i} className={clsx(CELL, 'pr-1 text-right', row.factors ? 'bg-white' : 'bg-[#f0f0f0]')}>{row.factors?.[i]}</td>
            ))}
            <td className="border-b border-[#a0a0a0] bg-white" />
          </tr>
        ))}
        {EMPTY_CASES.map((id) => (
          <tr key={id}>
            <RowHead id={id} />
            <td className={clsx(CELL, 'bg-white')} />
            {[0, 1, 2, 3, 4, 5].map((i) => <td key={i} className={clsx(CELL, 'bg-[#f0f0f0]')} />)}
            <td className="border-b border-[#a0a0a0] bg-[#f0f0f0]" />
          </tr>
        ))}
      </tbody>
    </table>
  )
}

function TablePanel() {
  const [tab, setTab] = useState('Casos de carga')
  return (
    <section className="bg-[#f0f0f0]">
      <div className="h-[5px] border-b border-white bg-[#d0d5de]" />
      <h2 className="flex h-5 items-center bg-[#b9c0cb] pl-[3px] text-[#333]">2.1 Casos de carga</h2>
      <div className="flex h-[25px] items-center overflow-hidden bg-gradient-to-b from-[#edf0f7] to-[#cfd4de] pl-2">
        <ToolItems items={BAR_TABLE} />
      </div>
      <div className='border-t-2 border-l border-[#6e6e6e] pl-px font-["Liberation_Sans",sans-serif]'>
        <CaseTable />
        <div className="mt-5 flex h-[17px] items-stretch text-[11px] leading-[15px] text-black">
          {['Casos de carga', 'Combinações de cargas', 'Combinações de resultados'].map((name) => (
            <button
              key={name}
              onClick={() => setTab(name)}
              className={clsx(
                'rounded-b-[4px] border-r border-b border-[#555] px-px whitespace-nowrap',
                tab === name ? 'bg-[#f8f8f8]' : 'border-t border-l bg-[#e8e4e4]',
              )}
            >
              {name}
            </button>
          ))}
          <div className="flex-1 border-t border-[#555]" />
        </div>
      </div>
      <div className="h-[19px] border-t border-[#d9d9d9]" />
    </section>
  )
}

function ContextMenu() {
  return (
    <div
      role="menu"
      className="absolute top-[285px] left-[177px] w-[217px] border border-[#868686] bg-[#fafafa] p-px text-[#444] shadow-[2px_2px_2px_rgba(0,0,0,0.35)]"
    >
      <div className="bg-gradient-to-r from-[#e9eef7] from-[24px] to-[#fafafa] to-[24px]">
        {[['newCase', 'Novo caso de carga...'], ['addCase', 'Adicionar casos de carga...']].map(([icon, label]) => (
          <button key={label} role="menuitem" className="flex h-[22px] w-full items-center pl-1">
            <Icon name={icon} size="size-4" />
            <span className="pl-[9px]">{label}</span>
          </button>
        ))}
        <div className="mt-[3px] ml-[30px] border-t border-[#c5c5c5] pb-1" />
      </div>
      <button
        role="menuitem"
        className="flex h-[22px] w-full items-center rounded-[2px] border border-[#dcb95c] bg-gradient-to-b from-[#fff6d8] via-[#ffd561] to-[#ffe283] pr-3 pl-[3px]"
      >
        <Icon name="delCase" size="size-4" />
        <span className="flex-1 pl-[9px] text-left">Eliminar</span>
        <span>Del</span>
      </button>
    </div>
  )
}

const MODES = [
  { label: 'AJUSTAR', width: 'w-[53px]' },
  { label: 'GRELHA', width: 'w-[50px]' },
  { label: 'CARTES', width: 'w-[50px]' },
  { label: 'AJUST. OBJ.', width: 'w-[67px]', raised: true },
  { label: 'LINHAS AUX.', width: 'w-[72px]' },
  { label: 'DXF', width: 'w-[28px]' },
]

function StatusBar() {
  return (
    <footer className='flex h-5 items-stretch border-t border-[#9a9fa9] bg-gradient-to-b from-[#dfe2e8] via-[#a9aeb7] to-[#b9bdc5] pr-px font-["Liberation_Sans",sans-serif] text-[11px] text-[#222]'>
      <span className="flex flex-1 items-center pt-[3px] pl-1">Elimina o caso de carga.</span>
      <div className="flex gap-[2px] pt-px">
        {MODES.map((mode) => (
          <button
            key={mode.label}
            className={clsx(
              'border-t border-r border-l text-center whitespace-nowrap',
              mode.width,
              mode.raised ? 'border-white border-r-[#8a8f98] pb-[2px]' : 'border-black border-r-white',
            )}
          >
            {mode.label}
          </button>
        ))}
      </div>
    </footer>
  )
}

export default function App() {
  return (
    <div className='relative flex min-h-screen flex-col bg-[#d0d5de] font-["Noto_Sans",sans-serif] text-[11px] leading-4'>
      <header className="flex h-[22px] items-center gap-[5px] bg-white pl-[2px] text-black">
        <svg viewBox="0 0 18 18" className="size-4" aria-hidden="true">
          <path d="M4 4l6-3 7 3v7l-5 6-5-3Z" fill="#5f87c0" stroke="#28457a" />
          <path d="M9 3l3 4 4-2M12 7v9" stroke="#28457a" fill="none" />
          <text x="0" y="16" fontFamily="Liberation Sans" fontWeight="bold" fontSize="13" fill="#f0b010" stroke="#5a3c00" strokeWidth=".5">5</text>
        </svg>
        <h1>RFEM 5.23.01 x64 - [lastfaelle*]</h1>
      </header>
      <MenuBar />
      <ToolRow groups={BAR_ONE} />
      <ToolRow groups={BAR_TWO} />
      <main className="flex flex-1 gap-[5px]">
        <Navigator />
        <div className="flex min-w-0 flex-1 flex-col">
          <Viewport />
          <TablePanel />
        </div>
      </main>
      <StatusBar />
      <ContextMenu />
    </div>
  )
}
